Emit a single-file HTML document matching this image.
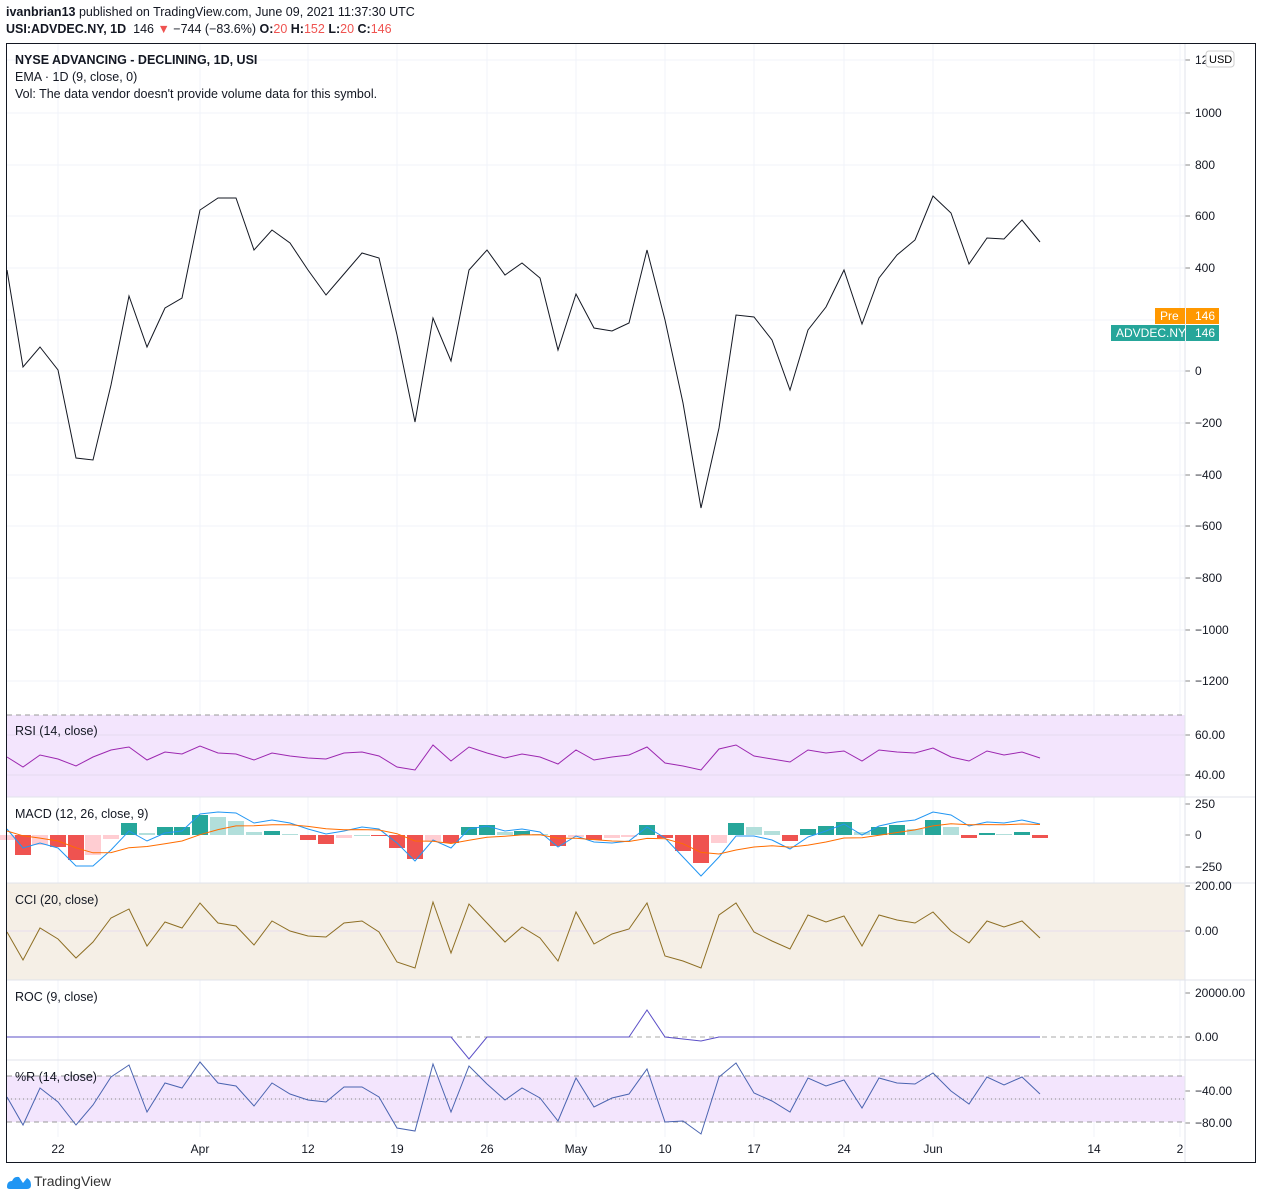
<!DOCTYPE html>
<html><head><meta charset="utf-8"><style>
body{margin:0;background:#fff;width:1262px;height:1200px;overflow:hidden;font-family:"Liberation Sans",sans-serif;}
.t{position:absolute;font-size:12.5px;color:#131722;white-space:nowrap}
</style></head><body>
<div class="t" style="left:6px;top:5px;"><b>ivanbrian13</b> published on TradingView.com, June 09, 2021 11:37:30 UTC</div>
<div class="t" style="left:6px;top:22px;"><b>USI:ADVDEC.NY, 1D</b>&nbsp; 146 <span style="color:#ef5350">▼</span> −744 (−83.6%) <b>O:</b><span style="color:#ef5350">20</span> <b>H:</b><span style="color:#ef5350">152</span> <b>L:</b><span style="color:#ef5350">20</span> <b>C:</b><span style="color:#ef5350">146</span></div>
<svg id="s" width="1262" height="1200" style="position:absolute;left:0;top:0" font-family="Liberation Sans, sans-serif" font-size="12"></svg>
<div class="t" style="left:15px;top:53px;font-weight:bold">NYSE ADVANCING - DECLINING, 1D, USI</div>
<div class="t" style="left:15px;top:70px;">EMA · 1D (9, close, 0)</div>
<div class="t" style="left:15px;top:87px;">Vol: The data vendor doesn't provide volume data for this symbol.</div>
<div class="t" style="left:15px;top:724px;">RSI (14, close)</div>
<div class="t" style="left:15px;top:807px;">MACD (12, 26, close, 9)</div>
<div class="t" style="left:15px;top:893px;">CCI (20, close)</div>
<div class="t" style="left:15px;top:990px;">ROC (9, close)</div>
<div class="t" style="left:15px;top:1070px;">%R (14, close)</div>
<div class="t" style="left:34px;top:1173px;font-size:14px;color:#333">TradingView</div>
<script>
const s=document.getElementById('s');let h='';
const X=[7,23,40,58,76,93,111,129,147,165,182,200,218,236,254,272,290,308,326,344,362,379,397,415,433,451,469,487,505,522,540,558,576,594,612,629,647,665,683,701,719,736,754,772,790,808,826,844,862,879,897,915,933,951,969,987,1004,1022,1040];
const P=[270,367,347,370,458,460,385,296,347,308,298,210,198,198,250,230,243,270,295,274,253,258,335,422,318,361,270,250,275,263,278,350,294,328,331,323,250,320,403,508,428,315,317,340,390,330,307,270,324,278,255,240,196,213,264,238,239,220,242];
const RSI=[757,767,755,759,766,757,750,747,760,752,754,746,753,754,760,753,756,758,759,753,752,756,767,770,745,761,747,753,758,754,757,764,750,760,757,755,747,763,766,770,749,745,756,759,762,750,753,751,761,750,752,753,748,757,761,751,755,752,758];
const CCI=[932,960,928,939,958,942,918,909,946,922,928,903,923,926,945,921,931,936,937,923,921,932,962,968,902,953,904,923,942,927,938,961,912,944,934,929,903,956,961,968,915,903,932,941,949,915,922,916,946,915,920,923,912,931,943,921,927,921,938];
const WR=[1097,1125,1088,1102,1125,1105,1077,1065,1112,1083,1088,1062,1083,1086,1106,1083,1094,1100,1102,1087,1087,1097,1128,1131,1064,1112,1066,1084,1100,1088,1098,1121,1078,1107,1098,1094,1069,1122,1121,1134,1077,1063,1093,1101,1112,1078,1086,1080,1108,1078,1083,1084,1073,1091,1104,1077,1085,1077,1094];
const MB=[829,848,843,848,866,866,850,831,841,833,831,814,812,813,823,820,823,829,834,831,827,829,843,861,840,848,829,826,831,829,832,847,836,842,843,841,827,838,857,876,857,836,836,840,849,837,831,824,835,826,822,820,812,815,826,822,823,820,824];
const ROC=X.map((x,i)=>i==26?1059:i==36?1010:i==39?1041:i==38?1039:1037);
// grid
[58,200,308,397,487,576,665,754,844,933,1094,1180].forEach(x=>h+=`<line x1="${x}" y1="44" x2="${x}" y2="1137" stroke="#f0f3fa"/>`);
const yl=[[60,'12'],[113,'1000'],[165,'800'],[216,'600'],[268,'400'],[371,'0'],[423,'−200'],[475,'−400'],[526,'−600'],[578,'−800'],[630,'−1000'],[681,'−1200']];
yl.forEach(([y,t])=>{h+=`<line x1="7" y1="${y}" x2="1185" y2="${y}" stroke="#f0f3fa"/><line x1="1185" y1="${y}" x2="1190" y2="${y}" stroke="#888"/><text x="1195" y="${y+4}" fill="#131722">${t}</text>`;});
h+='<line x1="7" y1="320" x2="1185" y2="320" stroke="#f0f3fa"/>';
h+='<rect x="1206" y="51" width="28" height="16" rx="3" fill="#fff" stroke="#ccc"/><text x="1209" y="63" font-size="11">USD</text>';
// panes
h+='<rect x="7" y="715" width="1178" height="82" fill="#f3e5fd"/>';
h+='<rect x="7" y="883" width="1178" height="97" fill="#f5efe6"/>';
h+='<rect x="7" y="1076" width="1178" height="46" fill="#f3e5fd"/>';
[735,775,931,1099].forEach(y=>h+=`<line x1="7" y1="${y}" x2="1185" y2="${y}" stroke="#e6dcef"/>`);
[715,797,883,980,1076,1122].forEach(y=>h+=`<line x1="7" y1="${y}" x2="1185" y2="${y}" stroke="#999" stroke-dasharray="5,4"/>`);
[797,883,980,1060].forEach(y=>h+=`<line x1="7" y1="${y}" x2="1256" y2="${y}" stroke="#e0e3eb"/>`);
h+='<line x1="7" y1="1099" x2="1185" y2="1099" stroke="#888" stroke-dasharray="1,3"/>';
h+='<line x1="7" y1="1037" x2="1185" y2="1037" stroke="#aaa" stroke-dasharray="5,4"/>';
[[735,'60.00'],[775,'40.00'],[804,'250'],[835,'0'],[867,'−250'],[886,'200.00'],[931,'0.00'],[993,'20000.00'],[1037,'0.00'],[1091,'−40.00'],[1123,'−80.00']].forEach(([y,t])=>h+=`<line x1="1185" y1="${y}" x2="1190" y2="${y}" stroke="#888"/><text x="1195" y="${y+4}" fill="#131722">${t}</text>`);
// macd hist
const H=[[-5,3],[-20,2],[-10,3],[-12,2],[-25,2],[-20,3],[-4,3],[12,0],[2,1],[8,0],[8,0],[20,0],[18,1],[14,1],[3,1],[4,0],[1,1],[-5,2],[-9,2],[-3,3],[0,1],[-1,2],[-13,2],[-24,2],[-6,3],[-8,2],[8,0],[10,0],[3,1],[4,0],[1,1],[-11,2],[-2,3],[-5,2],[-3,3],[-2,3],[10,0],[-3,2],[-16,2],[-28,2],[-8,3],[12,0],[8,1],[4,1],[-6,2],[6,0],[9,0],[13,0],[3,1],[8,0],[10,0],[6,1],[15,0],[8,1],[-3,2],[2,0],[1,1],[3,0],[-3,2]];
const C=['#26a69a','#b2dfdb','#ef5350','#ffcdd2'];
H.forEach(([v,c],i)=>{const y=v>0?835-v:835;h+=`<rect x="${X[i]-8}" y="${y}" width="16" height="${Math.abs(v)||1}" fill="${C[c]}"/>`;});
const line=(ys,col,w)=>`<polyline fill="none" stroke="${col}" stroke-width="${w||1}" points="${X.map((x,i)=>x+','+ys[i].toFixed(1)).join(' ')}"/>`;
const ema=(a,n)=>{let k=2/(n+1),e=a[0];return a.map(v=>e=e+k*(v-e));};
h+=line(MB,'#2196f3');
h+=line(ema(MB.map(v=>v+2),7),'#ff6d00');
h+=line(P,'#131722');
h+=line(RSI,'#9c27b0');
h+=line(CCI,'#8d6e23');
h+=line(ROC,'#5b4fc7');
h+=line(WR,'#4a64b0');
// dates
[[58,'22'],[200,'Apr'],[308,'12'],[397,'19'],[487,'26'],[576,'May'],[665,'10'],[754,'17'],[844,'24'],[933,'Jun'],[1094,'14'],[1180,'2']].forEach(([x,t])=>h+=`<text x="${x}" y="1153" text-anchor="middle" fill="#131722">${t}</text>`);
h+='<line x1="1185" y1="44" x2="1185" y2="1163" stroke="#e0e3eb"/>';
h+='<rect x="6.5" y="43.5" width="1249" height="1119" fill="none" stroke="#131722"/>';
// labels
h+='<rect x="1155" y="308" width="30" height="16" fill="#ff9800"/><text x="1160" y="320" fill="#fff">Pre</text><rect x="1186" y="308" width="33" height="16" fill="#ff9800"/><text x="1195" y="320" fill="#fff">146</text>';
h+='<rect x="1111" y="325" width="74" height="16" fill="#26a69a"/><text x="1116" y="337" fill="#fff">ADVDEC.NY</text><rect x="1186" y="325" width="33" height="16" fill="#26a69a"/><text x="1195" y="337" fill="#fff">146</text>';
// logo
h+='<path d="M7 1187 Q7 1181 12 1181 Q14 1176 19 1177 L23 1183 L27 1178 Q31 1180 31 1185 Q31 1189 27 1189 L10 1189 Q7 1189 7 1187Z" fill="#2196f3"/>';
s.innerHTML=h;
</script>
</body></html>
